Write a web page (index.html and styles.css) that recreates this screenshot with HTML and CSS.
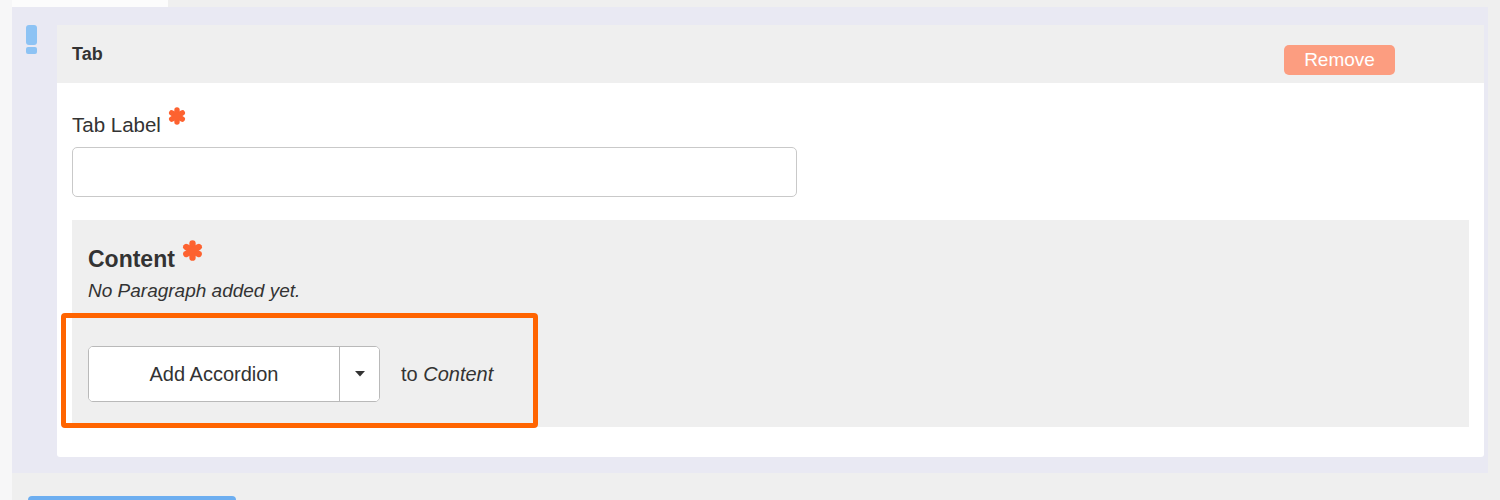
FILE: index.html
```html
<!DOCTYPE html>
<html>
<head>
<meta charset="utf-8">
<link rel="stylesheet" href="styles.css">
</head>
<body>
<div class="page">
  <div class="gutter"></div>
  <div class="main">
    <div class="top-strip"><div class="top-tab"></div></div>
    <div class="row">
      <div class="handle">
        <svg width="14" height="30" viewBox="0 0 14 30">
          <rect x="1" y="0" width="11" height="20" rx="3" fill="#8dc3f4"/>
          <rect x="1" y="22" width="11" height="7" rx="2" fill="#8dc3f4"/>
        </svg>
      </div>
      <div class="card">
        <div class="card-header">
          <span class="card-title">Tab</span>
          <button class="btn-remove">Remove</button>
        </div>
        <div class="card-body">
          <label class="field-label">Tab Label<svg class="req" width="18" height="18" viewBox="0 0 20 20"><g stroke="#fd6230" stroke-width="6" stroke-linecap="round"><line x1="10" y1="3.2" x2="10" y2="16.8"/><line x1="4.1" y1="6.6" x2="15.9" y2="13.4"/><line x1="4.1" y1="13.4" x2="15.9" y2="6.6"/></g></svg></label>
          <input class="text-input" type="text">
          <div class="content-box">
            <h3 class="content-title">Content<svg class="req req-lg" width="21" height="21" viewBox="0 0 20 20"><g stroke="#fd6230" stroke-width="6" stroke-linecap="round"><line x1="10" y1="3.2" x2="10" y2="16.8"/><line x1="4.1" y1="6.6" x2="15.9" y2="13.4"/><line x1="4.1" y1="13.4" x2="15.9" y2="6.6"/></g></svg></h3>
            <p class="empty-note">No Paragraph added yet.</p>
            <div class="add-row">
              <div class="btn-group">
                <button class="btn-main">Add Accordion</button>
                <button class="btn-caret"><svg width="10" height="6" viewBox="0 0 10 6"><path d="M0 0H10L5 5.5Z" fill="#333"/></svg></button>
              </div>
              <span class="to-text">to <em>Content</em></span>
            </div>
          </div>
          <div class="highlight"></div>
        </div>
      </div>
    </div>
    <div class="bottom">
      <div class="btn-blue"></div>
    </div>
  </div>
</div>
</body>
</html>
```

FILE: styles.css
```css
html, body {
  margin: 0;
  padding: 0;
  height: 500px;
  overflow: hidden;
}
body {
  font-family: "Liberation Sans", Arial, sans-serif;
  color: #333;
  background: #efefef;
}
.page {
  display: flex;
  height: 500px;
}
.gutter {
  width: 12px;
  background: #f7f7f8;
  flex: none;
}
.main {
  flex: 1;
  padding-right: 12px;
}
.top-strip {
  height: 7px;
  background: #efefef;
}
.top-tab {
  width: 156px;
  height: 7px;
  background: #fcfcfc;
}
.row {
  display: flex;
  background: #e9e9f3;
  padding: 18px 4px 16px 0;
}
.handle {
  width: 45px;
  flex: none;
  padding-left: 13px;
  box-sizing: border-box;
}
.handle svg {
  display: block;
}
.card {
  flex: 1;
  background: #fff;
  border-radius: 3px;
}
.card-header {
  height: 58px;
  background: #efefef;
  display: flex;
  justify-content: space-between;
  align-items: flex-start;
  padding: 0 89px 0 15px;
}
.card-title {
  font-weight: bold;
  font-size: 18px;
  line-height: 58px;
}
.btn-remove {
  margin-top: 20px;
  width: 111px;
  height: 30px;
  border: none;
  border-radius: 5px;
  background: #fc9d80;
  color: #fff;
  font-family: "Liberation Sans", Arial, sans-serif;
  font-size: 19px;
  padding: 0;
}
.card-body {
  position: relative;
  padding: 30px 15px 30px 15px;
}
.field-label {
  display: block;
  font-size: 20.5px;
  line-height: 24px;
  height: 24px;
}
.req {
  vertical-align: top;
  margin-left: 7px;
  margin-top: -6px;
}
.req-lg {
  margin-left: 7px;
  margin-top: -5px;
}
.text-input {
  display: block;
  margin-top: 10px;
  width: 725px;
  height: 50px;
  box-sizing: border-box;
  border: 1px solid #c9c9c9;
  border-radius: 5px;
  background: #fff;
}
.content-box {
  margin-top: 23px;
  background: #efefef;
  padding: 25px 16px 25px 16px;
}
.content-title {
  margin: 0;
  font-size: 23px;
  line-height: 28px;
  font-weight: bold;
}
.empty-note {
  margin: 7px 0 0 0;
  font-size: 19px;
  line-height: 22px;
  font-style: italic;
}
.add-row {
  margin-top: 44px;
  display: flex;
  align-items: center;
}
.btn-group {
  display: flex;
  height: 56px;
  border: 1px solid #b9b9b9;
  border-radius: 5px;
  background: #fff;
  box-sizing: border-box;
  overflow: hidden;
}
.btn-main {
  width: 251px;
  border: none;
  border-right: 1px solid #b9b9b9;
  background: #fff;
  font-family: "Liberation Sans", Arial, sans-serif;
  font-size: 20px;
  color: #333;
  padding: 0;
}
.btn-caret {
  width: 39px;
  border: none;
  background: #fff;
  padding: 0;
  display: flex;
  align-items: center;
  justify-content: center;
}
.to-text {
  margin-left: 21px;
  font-size: 20px;
}
.highlight {
  position: absolute;
  left: 4px;
  top: 230px;
  width: 477px;
  height: 115px;
  box-sizing: border-box;
  border: 5px solid #ff6400;
  border-radius: 4px;
}
.bottom {
  padding: 23px 0 0 16px;
}
.btn-blue {
  width: 208px;
  height: 4px;
  background: #6daef0;
  border-radius: 5px 5px 0 0;
}
```
